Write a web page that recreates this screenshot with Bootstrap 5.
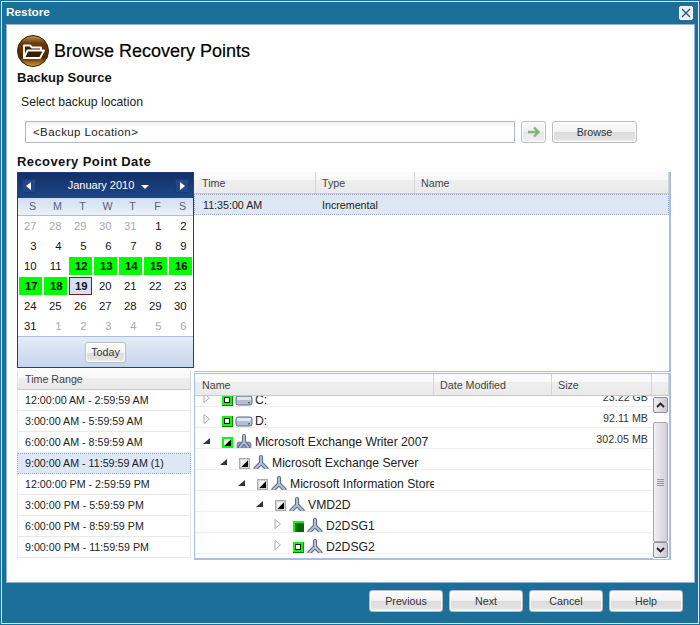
<!DOCTYPE html>
<html lang="en">
<head>
<meta charset="utf-8">
<title>Restore</title>
<link rel="stylesheet" href="https://cdn.jsdelivr.net/npm/bootstrap@5.3.0/dist/css/bootstrap.min.css">
<style>
html,body{margin:0;height:625px;overflow:hidden;background:#1c6f98}
body{font-family:"Liberation Sans",Arial,sans-serif;font-size:10.7px;color:#222;line-height:1}
.defs{display:block;width:0;height:0}
.frame{margin:1px;width:698px;height:623px;border:1px solid #d5e6f0;background:#1c6f98}
.titlebar{height:22px;padding:0 4px;color:#fff;font-weight:700;font-size:11.8px}
.closer{width:14px;height:14px;background:#e8f0fa;border-radius:2px;border:1px solid #fff;margin-right:1px}
.panel{margin:0 3px 0 4px;height:559px;background:#fff;border:1px solid #8db4dc;padding:10px 0 0 10px}
.head-row{height:32px;gap:5px}
.head-row h1{font-size:18px;font-weight:400;margin:2px 0 0;color:#000;-webkit-text-stroke:.2px #000}
.sect{font-size:13px;font-weight:700;color:#111;height:15px;line-height:15px;margin:0}
.sect-a{margin-top:3px}
.sect-b{margin-top:11px;letter-spacing:.4px}
.sel-label{font-size:12.2px;margin:9px 0 0 4px;height:16px;line-height:16px;color:#222}
.loc-row{margin:11px 0 0 8px;gap:6px;height:22px}
.loc{width:490px;height:22px;border:1px solid #b0b8cc;background:linear-gradient(#f0f0f0,#fff 6px);font-size:11.5px;padding:0 7px;line-height:20px;letter-spacing:.4px}
.gbtn{border:1px solid #bcbcbc;border-radius:3px;padding:0;font-size:10.7px;color:#333;line-height:1;background:linear-gradient(#fbfbfb 0,#f2f2f2 50%,#dcdcdc 50%,#e2e2e2 85%,#f5f5f5 100%);box-shadow:inset 0 0 0 1px #fff}
.gbtn:hover{color:#333;border-color:#bcbcbc}
.go{width:25px;height:22px;background:linear-gradient(#f8f8f8,#f0f0f0 50%,#e6e6e6 50%,#f0f0f0)}
.browse{width:85px;height:22px}
.main-area{margin-top:3px}
.left-col{width:177px}
.cal{height:196px;border:1px solid #1f3f7e;background:#fff}
.cal-top{height:25px;background:linear-gradient(#123068,#1f4785);color:#fff;font-size:11px;padding:0 4px}
.cal-nav{width:14px;height:14px;background:#23488a;border:1px solid #1b3b78}
.cal-title{margin-left:6px}
.caret-d{width:0;height:0;border-left:4px solid transparent;border-right:4px solid transparent;border-top:4px solid #fff;margin-left:7px;margin-top:2px}
.cal-days,.cal-grid{display:grid;grid-template-columns:repeat(7,25px)}
.cal-days{height:18px;background:linear-gradient(#d3e0f1,#e9f0f8);border-bottom:1px solid #a9bfdd;color:#555f78;text-align:center;line-height:17px;font-size:10.7px;padding-left:2px}
.cal-grid{grid-auto-rows:20px;height:120px;font-size:11.3px}
.dcell{margin:1px;text-align:right;padding-right:5.5px;line-height:18px;color:#111}
.dcell.off{color:#aaa}
.dcell.has{background:#00ff00;font-weight:700;color:#000;padding-right:4.5px}
.dcell.cur{background:#d7e1f1;border:1px solid #7d1d1d;font-weight:700;line-height:16px;padding-right:3.5px}
.cal-foot{height:31px;background:linear-gradient(#e4ecf6,#c5d5ea);border-top:1px solid #a9bfdd}
.today{width:41px;height:21px}
.ranges{width:174px;margin-top:2px}
.hcell{height:100%;padding-left:6px;border-right:1px solid #d6d6d6;line-height:20px;color:#444;font-size:10.7px}
.hcell.pad1{padding-left:7px}
.hbar{background:linear-gradient(#fbfbfb 0,#f8f8f8 40%,#eeeeee 40%,#eaeaea 100%);border-bottom:1px solid #c8c8c8}
.ranges .hbar{height:20px;border-left:1px solid #e0e0e0;border-right:1px solid #d6d6d6}
.ranges .hcell{line-height:19px;padding-left:7px}
.rrow{height:21px;line-height:20px;padding-left:7px;border:1px solid #e8e8e8;border-top:0;color:#222}
.rrow.act,.trow.act{background:#dde7f6;outline:1px dotted #9aaed0;outline-offset:-1px}
.right-col{width:477px}
.upper{height:200px;border-right:2px solid #a3c1e8;border-bottom:1px solid #a3c1e8}
.upper .hbar{height:22px}
.upper .hcell{line-height:22px}
.upper .hcell.pad1{padding-left:8px}
.trow{height:21px;line-height:22px}
.trow span{padding-left:6px;display:block}
.trow .w-time span{padding-left:9px}
.w-time{width:122px}.w-type{width:99px}
.lower{height:187px;margin-top:1px;border:2px solid #a3c1e8;border-top-width:1px;border-left-width:1px}
.lower .hbar{height:22px}
.lower .hcell{line-height:22px}
.w-lname{width:239px}.w-lmod{width:118px}.w-lsize{width:100px}
.tree-wrap{height:163px;overflow:hidden}
.tree-in{margin-top:-10px}
.nrow{height:21px;border-bottom:1px solid #eee;width:459px;font-size:12.2px;line-height:20px}
.nname{width:239px;overflow:hidden;white-space:nowrap;height:20px;padding:8px 0 0 6px;color:#222}
.nname span{line-height:12px}
.nname.lv1{padding-left:23px}.nname.lv2{padding-left:41px}.nname.lv3{padding-left:59px}.nname.lv4{padding-left:77px}
.arr{width:21px;height:20px;flex:none}
.box{width:11px;height:11px;flex:none}
.ico{width:18px;height:18px;margin:0 2px 0 2px;flex:none}
.nsize{width:214px;text-align:right;padding:1px 0 0 0;font-size:10.7px;color:#333}
.sb{width:16px;flex:none;background:#fff;padding-top:1px}
.sb-btn{width:15px;height:16px;border:1px solid #8e8e9c;border-radius:2px;background:linear-gradient(90deg,#ededf2,#c9c9d6);padding:0}
.sb-thumb{width:15px;height:120px;margin-top:9px;border:1px solid #a7a7b8;border-radius:2px;background:linear-gradient(90deg,#f0f0f4,#cfcfdc)}
.foot{padding:7px 0 0 0;gap:6px;margin-right:15px}
.fbtn{width:74px;height:22px;font-size:10.7px}
</style>
</head>
<body>
<svg class="defs" width="0" height="0">
<defs>
<linearGradient id="bglo" x1="0" y1="0" x2="0" y2="1"><stop offset="0" stop-color="#c79658"/><stop offset=".25" stop-color="#6b3a0a"/><stop offset=".7" stop-color="#4a2604"/><stop offset="1" stop-color="#e09a3c"/></linearGradient>
<symbol id="a-open" viewBox="0 0 11 11"><polygon points="9,3 9,9 2,9" fill="#333"/></symbol>
<symbol id="a-closed" viewBox="0 0 11 11"><polygon points="3,1.5 8.5,6 3,10.500" fill="#fff" stroke="#aaa"/></symbol>
<symbol id="b-none" viewBox="0 0 11 11"><rect width="11" height="11" fill="#00ff00"/><rect x="10" y="0" width="1" height="11" fill="#0a7a0a"/><rect x="0" y="10" width="11" height="1" fill="#0a7a0a"/><rect x="2.500" y="2.500" width="5" height="5" fill="#fff" stroke="#000"/></symbol>
<symbol id="b-part" viewBox="0 0 11 11"><rect width="11" height="11" fill="#00ff00"/><polygon points="2,9 9,2 9,9" fill="#000"/><polygon points="2,2 9,2 2,9" fill="#fff"/></symbol>
<symbol id="b-gray" viewBox="0 0 11 11"><rect width="11" height="11" fill="#d4d4d4"/><rect x=".5" y=".5" width="10" height="10" fill="none" stroke="#aaa"/><polygon points="2,9 9,2 9,9" fill="#000"/><polygon points="2,2 9,2 2,9" fill="#f2f2f2"/></symbol>
<symbol id="b-full" viewBox="0 0 11 11"><rect width="11" height="11" fill="#00ff00"/><rect x="2" y="2" width="9" height="9" fill="#056405"/></symbol>
<symbol id="disk" viewBox="0 0 18 18"><rect x="1" y="5" width="16" height="9" rx="2" fill="#b6bfd2" stroke="#5f6d92"/><rect x="2" y="6" width="14" height="3" rx="1" fill="#e2e7f1"/><rect x="13" y="11" width="2" height="1.500" fill="#2c9a2c"/></symbol>
<symbol id="comp" viewBox="0 0 18 18"><path d="M9 3V9M9 9L3.500 14.500M9 9l5.500 5.500" fill="none" stroke="#5f6d92" stroke-width="4.200" stroke-linecap="round"/><path d="M9 3V9M9 9L3.500 14.500M9 9l5.500 5.500" fill="none" stroke="#b4bdd4" stroke-width="2" stroke-linecap="round"/></symbol>
<symbol id="srv" viewBox="0 0 18 18"><rect x="2" y="9" width="14" height="8" rx="2" fill="#8e9ab8" stroke="#667397" stroke-width=".6"/><path d="M9 3v6M9 9l-4 5M9 9l4 5" fill="none" stroke="#5f6d92" stroke-width="4" stroke-linecap="round"/><path d="M9 3v6M9 9l-4 5M9 9l4 5" fill="none" stroke="#b4bdd4" stroke-width="2" stroke-linecap="round"/></symbol>
</defs>
</svg>

<div class="frame d-flex flex-column">
  <div class="titlebar d-flex justify-content-between align-items-center">
    <span>Restore</span>
    <span class="closer d-flex align-items-center justify-content-center">
      <svg width="10" height="10" viewBox="0 0 10 10"><path d="M1 1l8 8M9 1l-8 8" stroke="#2a4f8c" stroke-width="1.200" fill="none"/></svg>
    </span>
  </div>

  <div class="panel">
    <div class="head-row d-flex align-items-center">
      <svg width="32" height="32" viewBox="0 0 32 32">
        <circle cx="16" cy="16" r="15.500" fill="url(#bglo)" stroke="#3b2206"/>
        <path d="M7 23V10.500h6l2 2h9v3" fill="#3a1e04" stroke="#fff" stroke-width="1.800" stroke-linejoin="round"/>
        <path d="M7 23l3.500-7.500H27L23 23z" fill="#3a1e04" stroke="#fff" stroke-width="1.800" stroke-linejoin="round"/>
      </svg>
      <h1>Browse Recovery Points</h1>
    </div>
    <p class="sect sect-a">Backup Source</p>
    <p class="sel-label">Select backup location</p>
    <div class="loc-row d-flex">
      <div class="loc">&lt;Backup Location&gt;</div>
      <button type="button" class="btn gbtn go d-flex align-items-center justify-content-center">
        <svg width="14" height="12" viewBox="0 0 14 12"><path d="M1 6h10M7 1.500L11.500 6 7 10.500" fill="none" stroke="#79b77a" stroke-width="2.400"/></svg>
      </button>
      <button type="button" class="btn gbtn browse">Browse</button>
    </div>
    <p class="sect sect-b">Recovery Point Date</p>

    <div class="main-area d-flex">
      <div class="left-col">
        <div class="cal">
          <div class="cal-top d-flex align-items-center justify-content-between">
            <span class="cal-nav d-flex align-items-center justify-content-center"><svg width="6" height="8" viewBox="0 0 6 8"><polygon points="5,0 5,8 0,4" fill="#fff"/></svg></span>
            <span class="cal-title d-flex align-items-center">January 2010<span class="caret-d"></span></span>
            <span class="cal-nav d-flex align-items-center justify-content-center"><svg width="6" height="8" viewBox="0 0 6 8"><polygon points="1,0 1,8 6,4" fill="#fff"/></svg></span>
          </div>
          <div class="cal-days"><span>S</span><span>M</span><span>T</span><span>W</span><span>T</span><span>F</span><span>S</span></div>
          <div class="cal-grid">
            <div class="dcell off">27</div><div class="dcell off">28</div><div class="dcell off">29</div><div class="dcell off">30</div><div class="dcell off">31</div><div class="dcell">1</div><div class="dcell">2</div>
            <div class="dcell">3</div><div class="dcell">4</div><div class="dcell">5</div><div class="dcell">6</div><div class="dcell">7</div><div class="dcell">8</div><div class="dcell">9</div>
            <div class="dcell">10</div><div class="dcell">11</div><div class="dcell has">12</div><div class="dcell has">13</div><div class="dcell has">14</div><div class="dcell has">15</div><div class="dcell has">16</div>
            <div class="dcell has">17</div><div class="dcell has">18</div><div class="dcell cur">19</div><div class="dcell">20</div><div class="dcell">21</div><div class="dcell">22</div><div class="dcell">23</div>
            <div class="dcell">24</div><div class="dcell">25</div><div class="dcell">26</div><div class="dcell">27</div><div class="dcell">28</div><div class="dcell">29</div><div class="dcell">30</div>
            <div class="dcell">31</div><div class="dcell off">1</div><div class="dcell off">2</div><div class="dcell off">3</div><div class="dcell off">4</div><div class="dcell off">5</div><div class="dcell off">6</div>
          </div>
          <div class="cal-foot d-flex align-items-center justify-content-center">
            <button type="button" class="btn gbtn today">Today</button>
          </div>
        </div>
        <div class="ranges">
          <div class="hbar"><div class="hcell border-0">Time Range</div></div>
          <div class="rrow">12:00:00 AM - 2:59:59 AM</div>
          <div class="rrow">3:00:00 AM - 5:59:59 AM</div>
          <div class="rrow">6:00:00 AM - 8:59:59 AM</div>
          <div class="rrow act">9:00:00 AM - 11:59:59 AM (1)</div>
          <div class="rrow">12:00:00 PM - 2:59:59 PM</div>
          <div class="rrow">3:00:00 PM - 5:59:59 PM</div>
          <div class="rrow">6:00:00 PM - 8:59:59 PM</div>
          <div class="rrow">9:00:00 PM - 11:59:59 PM</div>
        </div>
      </div>

      <div class="right-col">
        <div class="upper">
          <div class="hbar d-flex">
            <div class="hcell pad1 w-time">Time</div>
            <div class="hcell w-type">Type</div>
            <div class="hcell flex-grow-1">Name</div>
          </div>
          <div class="trow act d-flex">
            <div class="w-time"><span>11:35:00 AM</span></div>
            <div class="w-type"><span>Incremental</span></div>
          </div>
        </div>

        <div class="lower">
          <div class="hbar d-flex">
            <div class="hcell pad1 w-lname">Name</div>
            <div class="hcell w-lmod">Date Modified</div>
            <div class="hcell w-lsize">Size</div>
            <div class="hcell flex-grow-1"></div>
          </div>
          <div class="d-flex">
            <div class="tree-wrap flex-grow-1">
              <div class="tree-in">
                <div class="nrow d-flex"><div class="nname d-flex align-items-center"><svg class="arr"><use href="#a-closed" width="11" height="11" y="2"/></svg><svg class="box"><use href="#b-none"/></svg><svg class="ico"><use href="#disk"/></svg><span>C:</span></div><div class="nsize">23.22 GB</div></div>
                <div class="nrow d-flex"><div class="nname d-flex align-items-center"><svg class="arr"><use href="#a-closed" width="11" height="11" y="2"/></svg><svg class="box"><use href="#b-none"/></svg><svg class="ico"><use href="#disk"/></svg><span>D:</span></div><div class="nsize">92.11 MB</div></div>
                <div class="nrow d-flex"><div class="nname d-flex align-items-center"><svg class="arr"><use href="#a-open" width="11" height="11" y="3"/></svg><svg class="box"><use href="#b-part"/></svg><svg class="ico"><use href="#srv"/></svg><span>Microsoft Exchange Writer 2007</span></div><div class="nsize">302.05 MB</div></div>
                <div class="nrow d-flex"><div class="nname lv1 d-flex align-items-center"><svg class="arr"><use href="#a-open" width="11" height="11" y="3"/></svg><svg class="box"><use href="#b-gray"/></svg><svg class="ico"><use href="#comp"/></svg><span>Microsoft Exchange Server</span></div></div>
                <div class="nrow d-flex"><div class="nname lv2 d-flex align-items-center"><svg class="arr"><use href="#a-open" width="11" height="11" y="3"/></svg><svg class="box"><use href="#b-gray"/></svg><svg class="ico"><use href="#comp"/></svg><span>Microsoft Information Store</span></div></div>
                <div class="nrow d-flex"><div class="nname lv3 d-flex align-items-center"><svg class="arr"><use href="#a-open" width="11" height="11" y="3"/></svg><svg class="box"><use href="#b-gray"/></svg><svg class="ico"><use href="#comp"/></svg><span>VMD2D</span></div></div>
                <div class="nrow d-flex"><div class="nname lv4 d-flex align-items-center"><svg class="arr"><use href="#a-closed" width="11" height="11" y="2"/></svg><svg class="box"><use href="#b-full"/></svg><svg class="ico"><use href="#comp"/></svg><span>D2DSG1</span></div></div>
                <div class="nrow d-flex"><div class="nname lv4 d-flex align-items-center"><svg class="arr"><use href="#a-closed" width="11" height="11" y="2"/></svg><svg class="box"><use href="#b-none"/></svg><svg class="ico"><use href="#comp"/></svg><span>D2DSG2</span></div></div>
              </div>
            </div>
            <div class="sb">
              <button type="button" class="btn sb-btn d-flex align-items-center justify-content-center"><svg width="9" height="6" viewBox="0 0 9 6"><path d="M1 5l3.500-3.500L8 5" fill="none" stroke="#222" stroke-width="1.800"/></svg></button>
              <div class="sb-thumb d-flex align-items-center justify-content-center"><svg width="7" height="7" viewBox="0 0 7 7"><path d="M0 .5h7M0 2.500h7M0 4.500h7M0 6.500h7" stroke="#888" stroke-width=".8"/></svg></div>
              <button type="button" class="btn sb-btn d-flex align-items-center justify-content-center"><svg width="9" height="6" viewBox="0 0 9 6"><path d="M1 1l3.500 3.500L8 1" fill="none" stroke="#222" stroke-width="1.800"/></svg></button>
            </div>
          </div>
        </div>
      </div>
    </div>
  </div>

  <div class="foot d-flex justify-content-end">
    <button type="button" class="btn gbtn fbtn">Previous</button>
    <button type="button" class="btn gbtn fbtn">Next</button>
    <button type="button" class="btn gbtn fbtn">Cancel</button>
    <button type="button" class="btn gbtn fbtn">Help</button>
  </div>
</div>
<script src="https://cdn.jsdelivr.net/npm/bootstrap@5.3.0/dist/js/bootstrap.bundle.min.js"></script>
</body>
</html>
